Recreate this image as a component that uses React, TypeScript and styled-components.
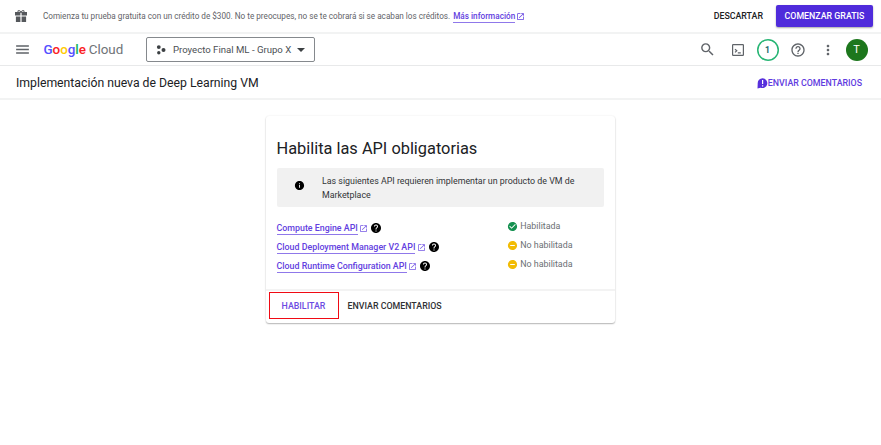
import React from "react";
import styled, { createGlobalStyle } from "styled-components";
import {
  MdMenu, MdSearch, MdMoreVert, MdHelpOutline, MdOpenInNew,
  MdCheckCircle, MdRemoveCircle, MdInfo, MdHelp,
} from "react-icons/md";

const GlobalStyle = createGlobalStyle`
  * { box-sizing: border-box; }
  body { margin: 0; background: #fff; font-family: Roboto, "Liberation Sans", sans-serif; color: #202124; }
  button { font-family: inherit; border: 0; background: none; padding: 0; }
  svg { display: block; flex: none; }
`;

const Page = styled.div`
  width: 881px;
  height: 445px;
  overflow: hidden;
  white-space: nowrap;
`;

const Bar = styled.header<{ $height: number; $left: number; $right: number; $line: number; $top?: number }>`
  display: flex;
  align-items: center;
  height: ${(p) => p.$height}px;
  padding: ${(p) => p.$top ?? 0}px ${(p) => p.$right}px 0 ${(p) => p.$left}px;
  border-bottom: ${(p) => p.$line}px solid ${(p) => (p.$line > 1 ? "#f2f3f3" : "#e8e9ea")};
`;

const Spacer = styled.div`
  flex: 1;
`;

const PromoText = styled.p`
  margin: 0 0 0 16px;
  font-size: 8.16px;
  color: #5f6368;
`;

const Link = styled.a<{ $size: number }>`
  color: #6240e0;
  font-size: ${(p) => p.$size}px;
  font-weight: 500;
  line-height: 10px;
  padding-bottom: 1px;
  margin-bottom: -1px;
  border-bottom: 1px solid #8f78ea;
`;

const PromoLink = styled.span`
  display: flex;
  align-items: center;
  gap: 1px;
  margin-left: 3px;
  color: #6240e0;
`;

const TextButton = styled.button<{ $color: string }>`
  color: ${(p) => p.$color};
  font-size: 8.84px;
  font-weight: 500;
  line-height: 12px;
`;

const PrimaryButton = styled.button`
  width: 97px;
  height: 22px;
  margin-left: 13px;
  border-radius: 2px;
  background: #4f2bdb;
  color: #fff;
  font-size: 8.84px;
  font-weight: 500;
  box-shadow: 0 1px 2px rgba(0, 0, 0, 0.35);
`;

const Logo = styled.div`
  display: flex;
  gap: 3px;
  width: 80px;
  margin-left: 12.5px;
  font-size: 13.4px;
  line-height: 18px;
  color: #6f7377;
`;

const Wordmark = styled.span`
  font-weight: 500;
  letter-spacing: -0.05px;
`;

const Letter = styled.span<{ $color: string }>`
  color: ${(p) => p.$color};
`;

const ProjectPicker = styled.button`
  display: flex;
  align-items: center;
  width: 169px;
  height: 25px;
  margin-left: 22.5px;
  padding: 0 9px 0 9px;
  border: 1px solid #85898d;
  border-radius: 2px;
  color: #4b4f54;
  font-size: 9.6px;
`;

const PickerLabel = styled.span`
  flex: 1;
  margin-left: 7px;
  text-align: left;
`;

const Tools = styled.nav`
  display: flex;
  align-items: center;
  color: #5f6368;
`;

const Circle = styled.div<{ $kind: "count" | "avatar" }>`
  display: flex;
  align-items: center;
  justify-content: center;
  width: 22px;
  height: 22px;
  border-radius: 50%;
  font-weight: ${(p) => (p.$kind === "count" ? 700 : 400)};
  font-size: ${(p) => (p.$kind === "count" ? 8.6 : 11)}px;
  color: ${(p) => (p.$kind === "count" ? "#17696a" : "#fff")};
  background: ${(p) => (p.$kind === "count" ? "#fff" : "#1d771d")};
  box-shadow: ${(p) => (p.$kind === "count" ? "inset 0 0 0 1.5px #27b574" : "none")};
`;

const ToolSlot = styled.div<{ $width: number }>`
  display: flex;
  justify-content: center;
  width: ${(p) => p.$width}px;
`;

const PageTitle = styled.h1`
  margin: 0;
  font-size: 12.24px;
  font-weight: 400;
`;

const Feedback = styled.div`
  display: flex;
  align-items: center;
  color: #5730dc;
`;

const Card = styled.main`
  width: 349px;
  height: 207px;
  margin: 16px 0 0 265.5px;
  border-radius: 3px;
  box-shadow: 0 1px 1.5px rgba(0, 0, 0, 0.28), 0 0 2px rgba(0, 0, 0, 0.08);
`;

const CardBody = styled.div`
  height: 175px;
  padding: 23px 11px 0;
  border-bottom: 2px solid #f3f3f3;
`;

const CardTitle = styled.h2`
  margin: 0 0 9px;
  font-size: 16.36px;
  line-height: 20px;
  font-weight: 400;
`;

const Notice = styled.div`
  display: flex;
  align-items: flex-start;
  height: 39px;
  padding: 6px 0 0 17.5px;
  border-radius: 2px;
  background: #f1f1f1;
`;

const InfoMark = styled.span`
  margin-top: 6px;
`;

const NoticeText = styled.p`
  margin: 0 0 0 17px;
  font-size: 8.86px;
  line-height: 14px;
  color: #323437;
`;

const ApiList = styled.div`
  margin-top: 11px;
`;

const ApiRow = styled.div`
  display: grid;
  grid-template-columns: 230px 1fr;
  height: 19px;
`;

const ApiName = styled.div`
  display: flex;
  align-items: center;
  gap: 1.5px;
  height: 19px;
  padding-top: 2px;
  color: #7558e4;
`;

const HelpMark = styled.span`
  margin: 0 0 2px 0.5px;
  color: #000;
`;

const Status = styled.div<{ $on: boolean }>`
  display: flex;
  align-items: center;
  gap: 2.7px;
  height: 16px;
  font-size: 8.9px;
  color: #6b6f73;
  svg { color: ${(p) => (p.$on ? "#149050" : "#f2bc05")}; }
`;

const CardActions = styled.div`
  display: flex;
  align-items: center;
  height: 29px;
  padding-left: 3px;
  gap: 9px;
`;

const Highlight = styled.div`
  display: flex;
  align-items: center;
  justify-content: center;
  width: 70px;
  height: 27px;
  border: 1px solid #f00a14;
`;

const GiftIcon = () => (
  <svg width="12" height="12" viewBox="0 0 12 12" fill="#55585c">
    <path d="M0 2h5.4v3.4H0zM6.6 2H12v3.4H6.6zM.9 6.5h4.5V12H.9zM6.6 6.5h4.5V12H6.6z" />
    <path d="M6 2.2C5.2.1 2.7-.2 2.8 1.4c0 .7 1.1.9 3.2.8Zm0 0C6.8.1 9.3-.2 9.2 1.4c0 .7-1.1.9-3.2.8Z" fill="none" stroke="#55585c" strokeWidth="1" />
  </svg>
);

const ProjectIcon = () => (
  <svg width="10" height="10" viewBox="0 0 10 10" fill="#3c4043">
    <circle cx="2.8" cy="2.1" r="1.9" />
    <circle cx="7.5" cy="4.9" r="2" />
    <circle cx="2.8" cy="7.8" r="1.7" />
  </svg>
);

const CaretIcon = () => (
  <svg width="8" height="4" viewBox="0 0 8 4" fill="#3c4043"><path d="M0 0h8L4 4z" /></svg>
);

const ShellIcon = () => (
  <svg width="12" height="12" viewBox="0 0 12 12" fill="none" stroke="#5f6368" strokeWidth="1.2">
    <rect x=".6" y=".6" width="10.8" height="10.8" rx=".6" />
    <path d="M3 5.2 4.8 6.8 3 8.4M5.8 8.9h3" />
  </svg>
);

const FeedbackIcon = () => (
  <svg width="11" height="11" viewBox="0 0 11 11">
    <path d="M5.6.3a4.9 4.9 0 1 1-2.1 9.4L.5 10.5l.2-4.9A4.9 4.9 0 0 1 5.6.3Z" fill="#5730dc" />
    <path d="M5.6 2v4M5.6 7.2v1.3" stroke="#fff" strokeWidth="1.2" />
  </svg>
);

const apis = [
  { name: "Compute Engine API", on: true },
  { name: "Cloud Deployment Manager V2 API", on: false },
  { name: "Cloud Runtime Configuration API", on: false },
];

const letters: [string, string][] = [
  ["G", "#5551ff"], ["o", "#fb2024"], ["o", "#ffcb05"],
  ["g", "#5551ff"], ["l", "#16b45c"], ["e", "#fb2024"],
];

export default function App() {
  return (
    <Page>
      <GlobalStyle />
      <Bar $height={34} $left={15} $right={8} $line={2}>
        <GiftIcon />
        <PromoText>
          Comienza tu prueba gratuita con un crédito de $300. No te preocupes, no se te cobrará si se acaban los créditos.
        </PromoText>
        <PromoLink>
          <Link $size={8.2}>Más información</Link>
          <MdOpenInNew size={9} />
        </PromoLink>
        <Spacer />
        <TextButton $color="#202124">DESCARTAR</TextButton>
        <PrimaryButton>COMENZAR GRATIS</PrimaryButton>
      </Bar>
      <Bar $height={32} $left={14} $right={10.5} $line={1}>
        <MdMenu size={17} color="#5f6368" />
        <Logo>
          <Wordmark>
            {letters.map(([l, c], i) => <Letter key={i} $color={c}>{l}</Letter>)}
          </Wordmark>
          <span>Cloud</span>
        </Logo>
        <ProjectPicker>
          <ProjectIcon />
          <PickerLabel>Proyecto Final ML - Grupo X</PickerLabel>
          <CaretIcon />
        </ProjectPicker>
        <Spacer />
        <Tools>
          <ToolSlot $width={30}><MdSearch size={17} /></ToolSlot>
          <ToolSlot $width={30}><ShellIcon /></ToolSlot>
          <ToolSlot $width={30}><Circle $kind="count">1</Circle></ToolSlot>
          <ToolSlot $width={30}><MdHelpOutline size={16} /></ToolSlot>
          <ToolSlot $width={30}><MdMoreVert size={16} /></ToolSlot>
          <ToolSlot $width={28}><Circle $kind="avatar">T</Circle></ToolSlot>
        </Tools>
      </Bar>
      <Bar $height={34} $left={16} $right={19} $line={2} $top={2}>
        <PageTitle>Implementación nueva de Deep Learning VM</PageTitle>
        <Spacer />
        <Feedback>
          <FeedbackIcon />
          <TextButton $color="#5f3be0">ENVIAR COMENTARIOS</TextButton>
        </Feedback>
      </Bar>
      <Card>
        <CardBody>
          <CardTitle>Habilita las API obligatorias</CardTitle>
          <Notice>
            <InfoMark><MdInfo size={11} color="#000" /></InfoMark>
            <NoticeText>
              Las siguientes API requieren implementar un producto de VM de<br />Marketplace
            </NoticeText>
          </Notice>
          <ApiList>
            {apis.map((api) => (
              <ApiRow key={api.name}>
                <ApiName>
                  <Link $size={8.86}>{api.name}</Link>
                  <MdOpenInNew size={9} />
                  <HelpMark><MdHelp size={12} /></HelpMark>
                </ApiName>
                <Status $on={api.on}>
                  {api.on ? <MdCheckCircle size={11} /> : <MdRemoveCircle size={11} />}
                  {api.on ? "Habilitada" : "No habilitada"}
                </Status>
              </ApiRow>
            ))}
          </ApiList>
        </CardBody>
        <CardActions>
          <Highlight><TextButton $color="#6b4be2">HABILITAR</TextButton></Highlight>
          <TextButton $color="#303134">ENVIAR COMENTARIOS</TextButton>
        </CardActions>
      </Card>
    </Page>
  );
}
